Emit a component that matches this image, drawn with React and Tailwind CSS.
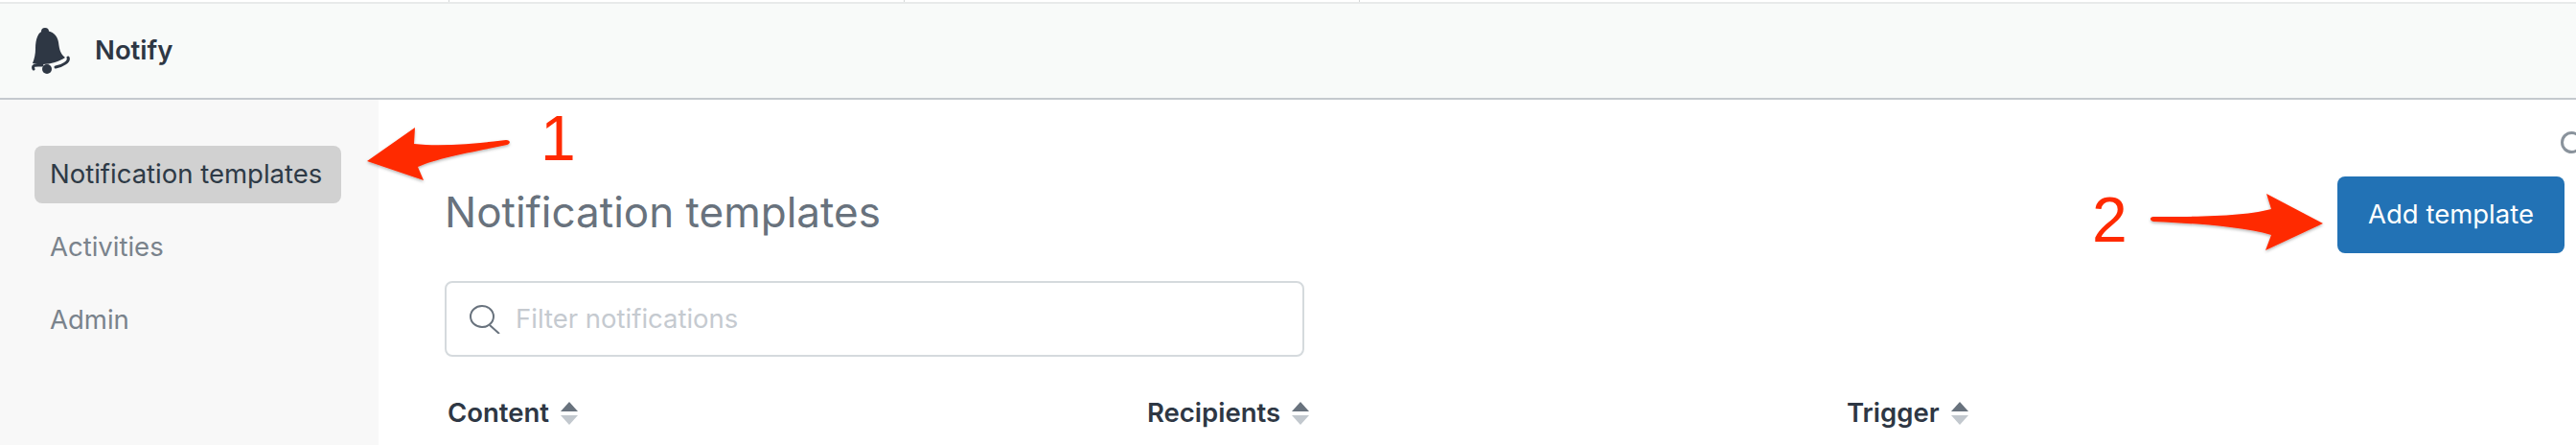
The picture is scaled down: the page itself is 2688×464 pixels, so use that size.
import React from "react";

const SortIcon = () => (
  <svg width="18" height="24" viewBox="0 0 18 24" className="shrink-0">
    <path d="M9 0 L18 10 H0 Z" fill="#68727d" />
    <path d="M0 14 H18 L9 24 Z" fill="#c2c8ce" />
  </svg>
);

const BellIcon = () => (
  <svg width="40" height="48" viewBox="0 0 40 48" className="shrink-0">
    <circle cx="14" cy="4" r="4" fill="#2e3744" />
    <path
      d="M14 3 C22 3 27 8 28 15 C29 23 30 27 35 31 C29 35 20 38 12 38 C8 38 4 38 1 37 C3 32 4 27 4 22 C4 11 7 3 14 3 Z"
      fill="#2e3744"
    />
    <path d="M2 43 C0 38 5 39 11 39" fill="none" stroke="#2e3744" strokeWidth="3" strokeLinecap="round" />
    <path d="M25 41 C32 40 40 35 38 31" fill="none" stroke="#2e3744" strokeWidth="3" strokeLinecap="round" />
    <circle cx="16" cy="43" r="5" fill="#2e3744" />
  </svg>
);

const SearchIcon = () => (
  <svg width="32" height="30" viewBox="0 0 32 30" className="shrink-0" fill="none" stroke="#68727d" strokeWidth="2">
    <ellipse cx="13" cy="12" rx="12" ry="11" />
    <path d="M21 21 L31 30" />
  </svg>
);

const ColumnHead = ({ label }) => (
  <div className="flex items-center gap-3">
    <span className="font-semibold text-[#2e3744]">{label}</span>
    <SortIcon />
  </div>
);

export default function App() {
  return (
    <div className="relative flex h-[464px] w-[2688px] flex-col overflow-hidden bg-white font-['Inter',sans-serif] text-[27.5px]">
      <div className="flex h-[2px] shrink-0 pl-[468px]">
        <div className="w-[475px] border-l border-[#d5d8d8]" />
        <div className="w-[475px] border-l border-[#d5d8d8]" />
        <div className="border-l border-[#d5d8d8]" />
      </div>
      <div className="h-[2px] shrink-0 bg-[#e8eaea]" />
      <header className="flex h-[100px] shrink-0 items-center gap-[26px] border-b-2 border-[#c4c9ce] bg-[#f8faf9] pl-[33px]">
        <BellIcon />
        <span className="font-semibold text-[#2e3744]">Notify</span>
      </header>
      <div className="flex flex-1">
        <nav className="flex w-[395px] shrink-0 flex-col gap-4 bg-[#f8f8f8] pl-[36px] pt-[48px]">
          <a className="flex h-[60px] w-[320px] items-center rounded-lg bg-[#d1d1d1] pl-[16px] text-[#2e3a46]">
            Notification templates
          </a>
          <a className="flex h-[60px] items-center pl-[16px] text-[#7a838c]">Activities</a>
          <a className="flex h-[60px] items-center pl-[16px] text-[#7a838c]">Admin</a>
        </nav>
        <main className="flex-1 pl-[69px] pr-[12px] pt-[80px]">
          <div className="flex items-center justify-between">
            <h1 className="-mt-[6px] text-[44px] text-[#68727d]">Notification templates</h1>
            <button className="h-[80px] w-[237px] rounded-lg bg-[#2272b5] text-white">Add template</button>
          </div>
          <div className="mt-[29px] flex h-[79px] w-[897px] items-center gap-[16px] rounded-lg border-2 border-[#d5dadd] pl-[24px]">
            <SearchIcon />
            <span className="text-[#c5cad0]">Filter notifications</span>
          </div>
          <div className="mt-[38px] grid grid-cols-[730px_730px_1fr] pl-[3px]">
            <ColumnHead label="Content" />
            <ColumnHead label="Recipients" />
            <ColumnHead label="Trigger" />
          </div>
        </main>
      </div>

      {/* annotations on top of the page */}
      <div className="absolute left-[2672px] top-[137px] h-[23px] w-[23px] rounded-full border-[3px] border-[#8a939c]" />
      <svg className="absolute left-0 top-0" width="2688" height="464" viewBox="0 0 2688 464">
        <defs>
          <filter id="arrowShadow" x="-10%" y="-10%" width="120%" height="130%">
            <feDropShadow dx="0" dy="1.5" stdDeviation="1.5" floodColor="#000" floodOpacity="0.3" />
          </filter>
        </defs>
        <path
          d="M383 168 L433 133 L432 150 C460 153 495 150 528 146 C533 146 533 150 529 151 C495 158 455 165 436 174 L442 188 Z"
          fill="#ff2a00"
          filter="url(#arrowShadow)"
        />
        <path
          d="M2424 233 L2365 202 L2370 218 C2340 226 2290 226 2247 226 C2243 226 2243 230 2247 231 C2290 233 2340 236 2370 245 L2364 261 Z"
          fill="#ff2a00"
          filter="url(#arrowShadow)"
        />
      </svg>
      <span className="absolute left-[564px] top-[107px] font-['Liberation_Sans',sans-serif] text-[66px] leading-[74px] text-[#ff2a00]">
        1
      </span>
      <span className="absolute left-[2183px] top-[192px] font-['Liberation_Sans',sans-serif] text-[66px] leading-[74px] text-[#ff2a00]">
        2
      </span>
    </div>
  );
}
